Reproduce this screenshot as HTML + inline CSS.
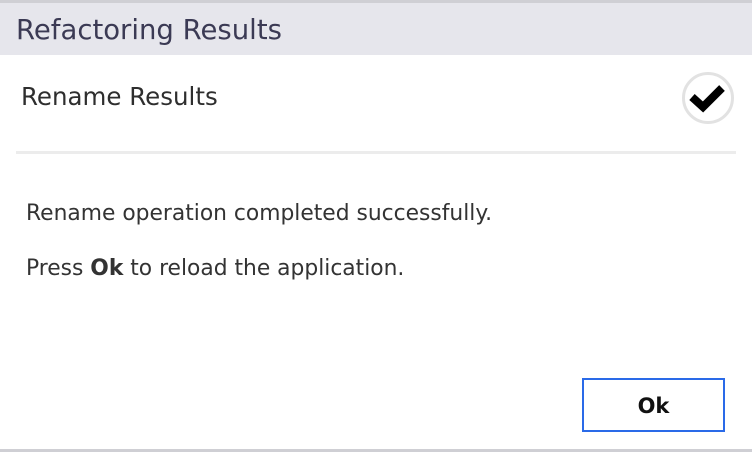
<!DOCTYPE html>
<html><head><style>
body{margin:0;width:752px;height:452px;background:#fff;font-family:"DejaVu Sans","Liberation Sans",sans-serif;position:relative;overflow:hidden}
.top{position:absolute;left:0;top:0;width:752px;height:3px;background:#cfcfd4}
.hdr{position:absolute;left:0;top:3px;width:752px;height:52px;background:#e6e6ec}
.hdr span{position:absolute;left:16px;top:11px;font-size:27.5px;color:#3b3a54;white-space:nowrap}
.sub{position:absolute;left:21px;top:82px;font-size:24.5px;color:#2e2e2e;white-space:nowrap}
.circ{position:absolute;left:682px;top:72px;width:46px;height:46px;border:3px solid #e2e2e2;border-radius:50%}
.div{position:absolute;left:16px;top:151px;width:720px;height:3px;background:#ececec}
.p{position:absolute;left:26px;font-size:21.8px;color:#333;white-space:nowrap}
.btn{position:absolute;left:582px;top:378px;width:139px;height:50px;border:2px solid #2a6ae8;font-weight:bold;font-size:21px;color:#111;text-align:center;line-height:52px}
.bot{position:absolute;left:0;top:449px;width:752px;height:3px;background:#cfcfd4}
</style></head><body>
<div class="top"></div>
<div class="hdr"><span>Refactoring Results</span></div>
<div class="sub">Rename Results</div>
<div class="circ"><svg width="46" height="46" viewBox="0 0 46 46"><path d="M7 22 L18 32 L37 13" fill="none" stroke="#000" stroke-width="8" stroke-linejoin="miter"/></svg></div>
<div class="div"></div>
<div class="p" style="top:201px">Rename operation completed successfully.</div>
<div class="p" style="top:256px">Press <b>Ok</b> to reload the application.</div>
<div class="btn">Ok</div>
<div class="bot"></div>
</body></html>
